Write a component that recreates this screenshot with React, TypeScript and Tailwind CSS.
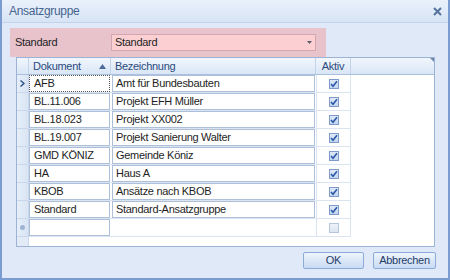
import React from "react";

const rows: [string, string][] = [
  ["AFB", "Amt für Bundesbauten"],
  ["BL.11.006", "Projekt EFH Müller"],
  ["BL.18.023", "Projekt XX002"],
  ["BL.19.007", "Projekt Sanierung Walter"],
  ["GMD KÖNIZ", "Gemeinde Köniz"],
  ["HA", "Haus A"],
  ["KBOB", "Ansätze nach KBOB"],
  ["Standard", "Standard-Ansatzgruppe"],
];

function Check({ on }: { on: boolean }) {
  return (
    <div
      className={
        on
          ? "w-[10px] h-[10px] border border-[#7d9ccc] bg-gradient-to-b from-[#dfe9f8] to-[#c3d5ef] flex items-center justify-center"
          : "w-[10px] h-[10px] border border-[#b5c5dc] bg-gradient-to-b from-[#eef2f8] to-[#dde5f0]"
      }
    >
      {on && (
        <svg width="8" height="8" viewBox="0 0 8 8">
          <path d="M1 4 L3 6.2 L7 1.2" stroke="#2b58a8" strokeWidth="1.6" fill="none" />
        </svg>
      )}
    </div>
  );
}

export default function App() {
  return (
    <div
      className="w-[450px] h-[280px] flex flex-col bg-[#dfe9f7] border-l-[2px] border-r-[2px] border-b-[2px] border-[#7b9cd0] text-[11px] tracking-[-0.3px] text-[#1e1e1e]"
      style={{ fontFamily: '"Liberation Sans", Arial, sans-serif' }}
    >
      {/* title bar */}
      <div className="h-[23px] shrink-0 flex items-center justify-between pl-[7px] pr-[6px] bg-gradient-to-b from-[#eaf1fb] to-[#d7e4f5] border-b border-[#c2d4ec]">
        <span className="text-[12px] text-[#46658f]">Ansatzgruppe</span>
        <svg width="9" height="9" viewBox="0 0 9 9">
          <path d="M1 1 L8 8 M8 1 L1 8" stroke="#56739c" strokeWidth="2" />
        </svg>
      </div>

      {/* pink panel */}
      <div className="ml-[8px] mt-[5px] w-[316px] h-[29px] shrink-0 bg-[#e8c3cc] flex items-center pl-[5px]">
        <span className="w-[96px]">Standard</span>
        <div className="w-[205px] h-[17px] bg-[#fcd0d2] border border-[#d3a6b0] flex items-center justify-between pl-[3px] pr-[3px]">
          <span>Standard</span>
          <svg width="5" height="3" viewBox="0 0 5 3">
            <path d="M0 0 L5 0 L2.5 3 Z" fill="#5a5a6a" />
          </svg>
        </div>
      </div>

      {/* grid */}
      <div className="ml-[14px] w-[419px] h-[190px] shrink-0 border border-[#9db3d4] bg-white flex flex-col">
        {/* header */}
        <div className="h-[17px] shrink-0 flex bg-gradient-to-b from-[#f1f6fd] to-[#dae6f6] border-b border-[#a9bfdd] text-[#2b4a7c] relative">
          <div className="w-[12px] border-r border-[#c3d3ea]" />
          <div className="w-[82px] border-r border-[#c3d3ea] flex items-center justify-between pl-[4px] pr-[4px]">
            <span>Dokument</span>
            <svg width="7" height="5" viewBox="0 0 7 5">
              <path d="M3.5 0 L7 5 L0 5 Z" fill="#4c6c9c" />
            </svg>
          </div>
          <div className="w-[205px] border-r border-[#c3d3ea] flex items-center pl-[4px]">Bezeichnung</div>
          <div className="w-[35px] border-r border-[#c3d3ea] flex items-center justify-center">Aktiv</div>
          <div className="flex-1" />
          <div className="absolute right-0 top-0 w-0 h-0 border-t-[4px] border-l-[4px] border-t-[#6f86aa] border-l-transparent" />
        </div>

        {rows.map(([d, b], i) => (
          <div key={d} className="h-[18px] shrink-0 flex">
            <div className="w-[12px] bg-gradient-to-r from-[#e6eef9] to-[#d9e4f4] border-r border-b border-[#c9d7ec] flex items-center justify-center">
              {i === 0 && (
                <svg width="5" height="7" viewBox="0 0 5 7">
                  <path d="M0.5 0.5 L4 3.5 L0.5 6.5" stroke="#2c4f86" strokeWidth="1.4" fill="none" />
                </svg>
              )}
            </div>
            <div className="w-[82px] border-b border-[#dbe5f2] pr-[1px]">
              <div
                className={
                  i === 0
                    ? "h-[17px] border border-dotted border-[#555] bg-white flex items-center pl-[4px]"
                    : "h-[17px] border border-[#aebfd9] bg-white flex items-center pl-[4px]"
                }
              >
                {d}
              </div>
            </div>
            <div className="w-[205px] border-b border-[#dbe5f2] pl-[1px] pr-[1px]">
              <div className="h-[17px] border border-[#aebfd9] bg-white flex items-center pl-[3px]">{b}</div>
            </div>
            <div className="w-[35px] border-l border-r border-b border-[#dbe5f2] flex items-center justify-center">
              <Check on />
            </div>
            <div className="flex-1" />
          </div>
        ))}

        {/* new row */}
        <div className="h-[18px] shrink-0 flex">
          <div className="w-[12px] bg-gradient-to-r from-[#e6eef9] to-[#d9e4f4] border-r border-b border-[#c9d7ec] flex items-center justify-center">
            <div className="w-[5px] h-[5px] rounded-full bg-[#9fb4d4]" />
          </div>
          <div className="w-[82px] border-b border-[#dbe5f2] pr-[1px]">
            <div className="h-[17px] border border-[#aebfd9] bg-white" />
          </div>
          <div className="w-[205px] border-b border-[#dbe5f2]" />
          <div className="w-[35px] border-l border-r border-b border-[#dbe5f2] flex items-center justify-center">
            <Check on={false} />
          </div>
          <div className="flex-1" />
        </div>
        <div className="flex-1 flex">
          <div className="w-[12px] bg-[#e3ebf7] border-r border-[#c9d7ec]" />
        </div>
      </div>

      {/* buttons */}
      <div className="flex justify-end gap-[9px] pr-[12px] mt-[5px]">
        <div className="w-[61px] h-[17px] rounded-[2px] border border-[#8eaad6] bg-gradient-to-b from-[#eef4fc] to-[#c9dbf3] flex items-center justify-center text-[#1f3d6b]">
          OK
        </div>
        <div className="w-[63px] h-[17px] rounded-[2px] border border-[#8eaad6] bg-gradient-to-b from-[#eef4fc] to-[#c9dbf3] flex items-center justify-center text-[#1f3d6b]">
          Abbrechen
        </div>
      </div>
    </div>
  );
}
